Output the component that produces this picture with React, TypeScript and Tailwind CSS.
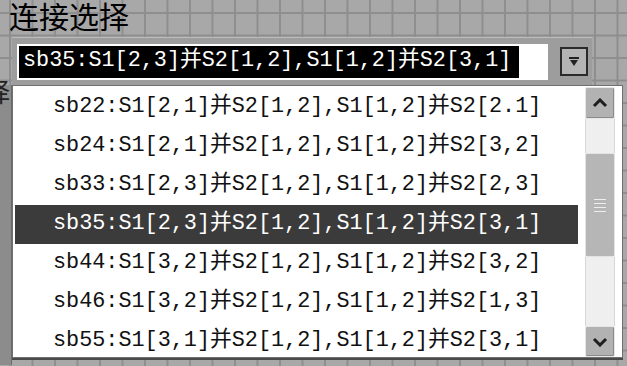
const items = [
  "sb22:S1[2,1]并S2[1,2],S1[1,2]并S2[2.1]",
  "sb24:S1[2,1]并S2[1,2],S1[1,2]并S2[3,2]",
  "sb33:S1[2,3]并S2[1,2],S1[1,2]并S2[2,3]",
  "sb35:S1[2,3]并S2[1,2],S1[1,2]并S2[3,1]",
  "sb44:S1[3,2]并S2[1,2],S1[1,2]并S2[3,2]",
  "sb46:S1[3,2]并S2[1,2],S1[1,2]并S2[1,3]",
  "sb55:S1[3,1]并S2[1,2],S1[1,2]并S2[3,1]",
]

const mono = "font-['Liberation_Mono','Noto_Sans_CJK_SC',monospace]"

function ScrollButton({ up }: { up?: boolean }) {
  return (
    <div className="flex h-full w-full items-center justify-center rounded-[2px] border border-[#e6e6e6] bg-[#b2b2b2] shadow-[inset_-1px_-1px_0_#8c8c8c]">
      <svg width="16" height="10" viewBox="0 0 16 10">
        <path
          d={up ? "M2 8 L8 2 L14 8" : "M2 2 L8 8 L14 2"}
          fill="none"
          stroke="#1e1e1e"
          strokeWidth="3"
        />
      </svg>
    </div>
  )
}

export default function App() {
  return (
    <div className="relative h-[366px] w-[627px] overflow-hidden bg-[#a8a8a8] bg-[linear-gradient(90deg,#8e8e8e_2px,transparent_2px),linear-gradient(0deg,#8e8e8e_2px,transparent_2px)] bg-[length:22.5px_22.5px] bg-[position:9px_14px]">
      <div className="pl-[9px] font-['Noto_Sans_CJK_SC',sans-serif] text-[30px] leading-[30px] text-black">
        连接选择
      </div>

      <div className="ml-[12px] mt-[7px] flex h-[48px] w-[580px] items-center border-t border-[#bdbdbd] bg-[#9d9d9d]">
        <div className="ml-[5px] flex h-[36px] w-[531px] items-center bg-white px-[2px]">
          <span className={`${mono} flex h-[32px] w-[500px] items-center bg-black pl-[4px] text-[21.8px] text-white`}>
            sb35:S1[2,3]并S2[1,2],S1[1,2]并S2[3,1]
          </span>
        </div>
        <div className="ml-[12px] flex h-[29px] w-[28px] items-center justify-center border-2 border-[#2a2a2a] bg-[#b4b4b4]">
          <svg width="12" height="10" viewBox="0 0 12 10">
            <rect x="1" y="0" width="10" height="2" fill="#222" />
            <path d="M2 3 L10 3 L6 9 Z" fill="#222" />
          </svg>
        </div>
      </div>

      <div className="flex">
        <div className="h-[280px] w-[12px] border-r border-[#6a6a6a] bg-[#8c8c8c]">
          <div className="-ml-[16px] -mt-[4px] font-['Noto_Sans_CJK_SC',sans-serif] text-[26px] leading-[20px] text-[#222]">
            择
          </div>
        </div>
      </div>

      <div className="absolute left-[12px] top-[85px] flex h-[273px] w-[611px] border border-[#707070] bg-white shadow-[0_2px_0_#4a4a4a]">
        <div className="w-[565px] pl-[2px] pt-[2px]">
          {items.map((t, i) => (
            <div
              key={t}
              className={`${mono} flex h-[39px] items-center pl-[38px] text-[21.8px] ${
                i === 3 ? "bg-[#3b3b3b] text-white" : "text-[#111]"
              }`}
            >
              {t}
            </div>
          ))}
        </div>
        <div className="ml-[7px] mt-[1px] flex h-[270px] w-[30px] flex-col">
          <div className="h-[32px]">
            <ScrollButton up />
          </div>
          <div className="h-[34px] border-x border-[#d6d6d6] bg-[#efefef]" />
          <div className="flex h-[104px] flex-col items-center justify-center gap-[3px] rounded-[2px] border border-[#e2e2e2] bg-[#b6b6b6]">
            <div className="h-[1px] w-[12px] bg-[#eeeeee]" />
            <div className="h-[1px] w-[12px] bg-[#eeeeee]" />
            <div className="h-[1px] w-[12px] bg-[#eeeeee]" />
            <div className="h-[1px] w-[12px] bg-[#eeeeee]" />
          </div>
          <div className="h-[69px] border-x border-[#d6d6d6] bg-[#efefef]" />
          <div className="h-[31px]">
            <ScrollButton />
          </div>
        </div>
      </div>
    </div>
  )
}
